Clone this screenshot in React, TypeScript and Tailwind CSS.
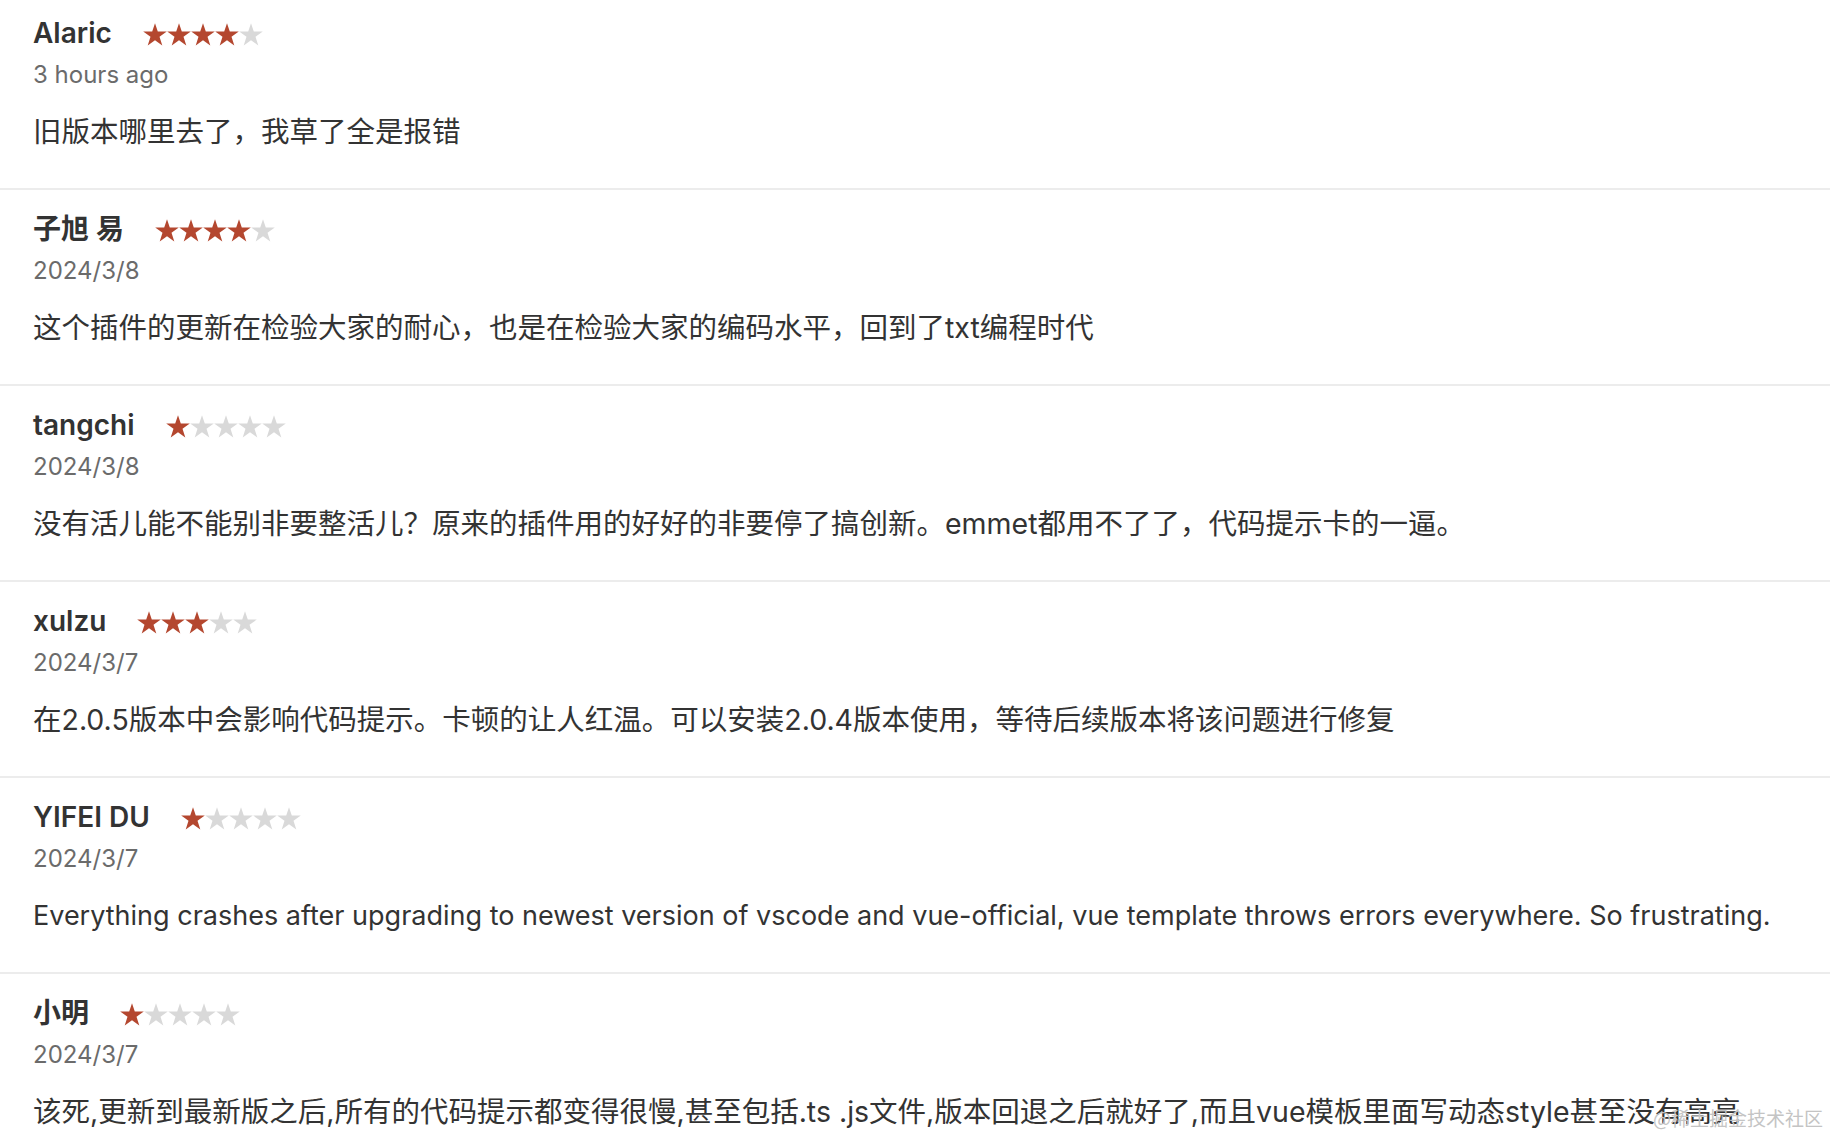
import React from "react";

type Review = { name: string; stars: number; date: string; body: string; latin?: boolean };

const reviews: Review[] = [
  { name: "Alaric", stars: 4, date: "3 hours ago", body: "旧版本哪里去了，我草了全是报错" },
  { name: "子旭 易", stars: 4, date: "2024/3/8", body: "这个插件的更新在检验大家的耐心，也是在检验大家的编码水平，回到了txt编程时代" },
  { name: "tangchi", stars: 1, date: "2024/3/8", body: "没有活儿能不能别非要整活儿？原来的插件用的好好的非要停了搞创新。emmet都用不了了，代码提示卡的一逼。" },
  { name: "xulzu", stars: 3, date: "2024/3/7", body: "在2.0.5版本中会影响代码提示。卡顿的让人红温。可以安装2.0.4版本使用，等待后续版本将该问题进行修复" },
  {
    name: "YIFEI DU",
    stars: 1,
    date: "2024/3/7",
    body: "Everything crashes after upgrading to newest version of vscode and vue-official, vue template throws errors everywhere. So frustrating.",
    latin: true,
  },
  {
    name: "小明",
    stars: 1,
    date: "2024/3/7",
    body: "该死,更新到最新版之后,所有的代码提示都变得很慢,甚至包括.ts .js文件,版本回退之后就好了,而且vue模板里面写动态style甚至没有高亮",
  },
];

function Star({ filled }: { filled: boolean }) {
  return (
    <svg width="24" height="23" viewBox="0 0 24 23" className="block">
      <path
        d="M12 0.3L14.79 8.57L23.79 8.57L16.51 13.86L19.29 22.43L12 17.14L4.71 22.43L7.49 13.86L0.21 8.57L9.21 8.57Z"
        fill={filled ? "#b4472f" : "#d9d9d9"}
      />
    </svg>
  );
}

function Stars({ n }: { n: number }) {
  return (
    <div className="flex -ml-[1px] mt-[3px]">
      {[0, 1, 2, 3, 4].map((i) => (
        <Star key={i} filled={i < n} />
      ))}
    </div>
  );
}

export default function App() {
  return (
    <div
      className="relative w-[1830px] h-[1138px] overflow-hidden bg-white"
      style={{ fontFamily: '"Inter", "Noto Sans CJK SC", sans-serif' }}
    >
      {reviews.map((r, i) => (
        <div
          key={i}
          className={`pl-[33px] pr-4 pb-[36px] border-b-2 border-[#ececec] ${i === 0 ? "pt-[15px]" : "pt-[21px]"}`}
        >
          <div className="flex items-center gap-[32px] h-9">
            <span className="text-[28px] leading-9 font-semibold text-[#333333]">{r.name}</span>
            <Stars n={r.stars} />
          </div>
          <div className="mt-[8px] text-[24px] leading-8 text-[#6b6b6b]">{r.date}</div>
          <div
            className={`mt-[21px] leading-10 text-[#333333] whitespace-nowrap ${r.latin ? "text-[27px]" : "text-[28.5px]"}`}
          >
            {r.body}
          </div>
        </div>
      ))}
      <div
        className="absolute right-[7px] bottom-[8px] text-[19px] leading-6 text-[#c4c4c4]"
        style={{ fontFamily: '"Noto Sans CJK SC", sans-serif' }}
      >
        @稀土掘金技术社区
      </div>
    </div>
  );
}
